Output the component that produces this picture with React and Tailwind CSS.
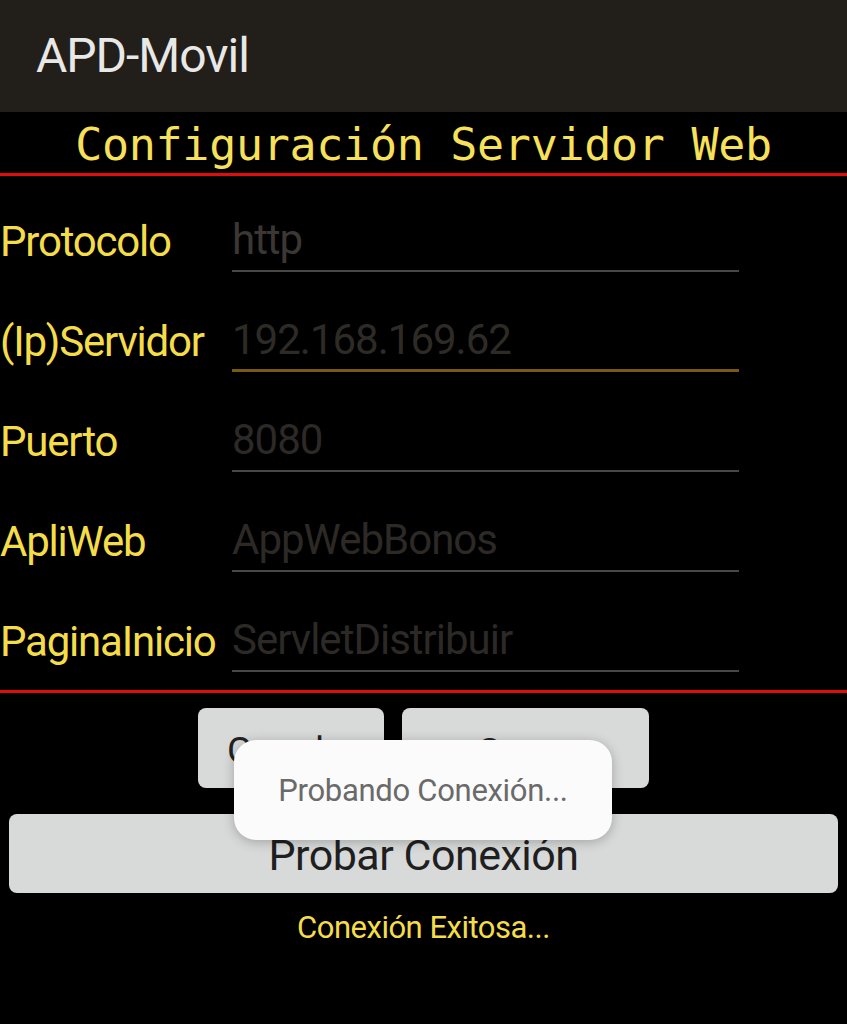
import React from 'react';

const fields = [
  { label: 'Protocolo', value: 'http', focused: false, tone: 'text-[#3a3734]' },
  { label: '(Ip)Servidor', value: '192.168.169.62', focused: true, tone: 'text-[#2e2b27]' },
  { label: 'Puerto', value: '8080', focused: false, tone: 'text-[#2c2926]' },
  { label: 'ApliWeb', value: 'AppWebBonos', focused: false, tone: 'text-[#2c2926]' },
  { label: 'PaginaInicio', value: 'ServletDistribuir', focused: false, tone: 'text-[#2c2926]' },
];

const sans = { fontFamily: 'Roboto, "Noto Sans", sans-serif' };

const App = () => {
  return (
    <div className="w-[847px] h-[1024px] bg-black overflow-hidden" style={sans}>
      {/* Action bar */}
      <div className="h-[112px] bg-[#221f1b] flex items-center pl-[36px]">
        <h1 className="text-[48px] leading-none text-[#e8e8e6] tracking-[-1px]">APD-Movil</h1>
      </div>

      {/* Title */}
      <div className="h-[61px] flex items-center justify-center pt-[4px]">
        <h2 className="text-[45px] leading-none text-[#f7e05a] font-['DejaVu_Sans_Mono',monospace] tracking-[-0.3px]">
          Configuración Servidor Web
        </h2>
      </div>
      <div className="h-[3px] bg-[#e30b0b]" />

      {/* Form rows */}
      <div className="flex flex-col">
        {fields.map((f) => (
          <div key={f.label} className="h-[100px] flex items-end pb-[4px]">
            <div className="w-[232px] shrink-0 pb-[9px] text-[42px] leading-none text-[#f5dd4a] tracking-[-1.2px] whitespace-nowrap">
              {f.label}
            </div>
            <div
              className={
                'w-[507px] text-[42px] leading-none tracking-[-1px] whitespace-nowrap ' +
                f.tone +
                (f.focused
                  ? ' pb-[8px] border-b-[3px] border-[#7a5a12]'
                  : ' pb-[9px] border-b-2 border-[#4a4846]')
              }
            >
              {f.value}
            </div>
          </div>
        ))}
      </div>

      <div className="h-[14px]" />
      <div className="h-[3px] bg-[#e30b0b]" />

      {/* Buttons */}
      <div className="relative px-[9px] pt-[15px]">
        <div className="flex justify-center gap-[18px]">
          <button className="w-[186px] h-[80px] bg-[#d8d9d9] rounded-[8px] text-[37px] leading-none text-[#222] tracking-[-0.5px] pt-[4px]">
            Guardar
          </button>
          <button className="w-[247px] h-[80px] bg-[#d8d9d9] rounded-[8px] text-[37px] leading-none text-[#222] tracking-[-0.5px] pt-[6px]">
            Cerrar
          </button>
        </div>
        <button className="mt-[26px] w-full h-[79px] bg-[#d8d9d9] rounded-[8px] text-[43px] leading-none text-[#1f1f1f] tracking-[-0.5px] pt-[4px]">
          Probar Conexión
        </button>
        <p className="mt-[19px] text-center text-[31px] leading-none text-[#f5dd4a] tracking-[-0.5px]">Conexión Exitosa...</p>

        {/* Toast */}
        <div className="absolute left-[234px] top-[47px] w-[378px] h-[100px] bg-[#fbfbfb] rounded-[22px] shadow-[0_2px_12px_rgba(0,0,0,0.25)] flex items-center justify-center">
          <span className="text-[31px] leading-none text-[#6a6a6a] tracking-[-0.3px]">Probando Conexión...</span>
        </div>
      </div>
    </div>
  );
};

export default App;
